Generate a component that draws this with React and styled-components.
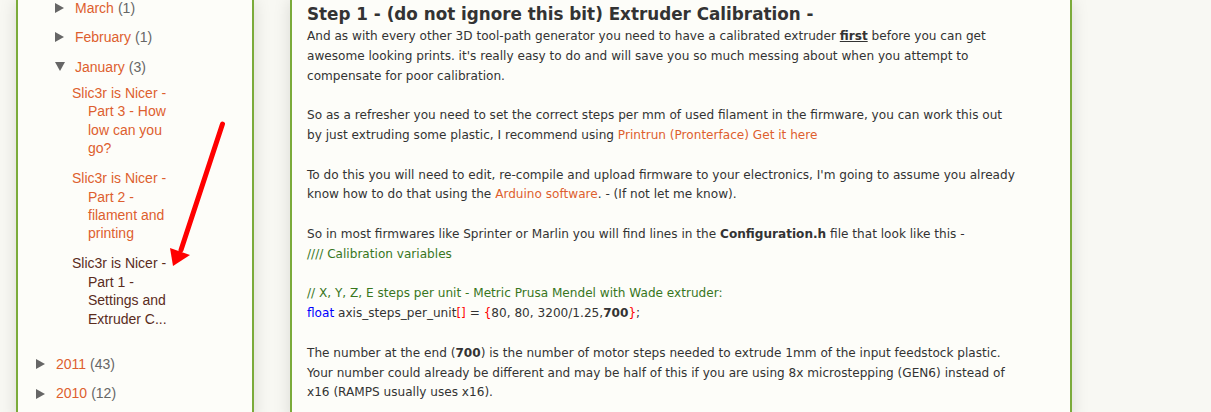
import React from 'react';
import styled, { createGlobalStyle } from 'styled-components';

const GlobalStyle = createGlobalStyle`
  html, body {
    margin: 0;
    padding: 0;
    background: #f8f8f3;
    overflow: hidden;
  }
`;

const PageStyled = styled.div`
  display: flex;
  align-items: stretch;
  gap: 36px;
  padding-left: 16px;
  min-height: 100vh;
`;

const Panel = styled.div`
  box-sizing: border-box;
  background: #fdfdf9;
  border-left: 2px solid #7bab3b;
  border-right: 2px solid #7bab3b;
  box-shadow: 0 0 16px rgba(0, 0, 0, 0.13);
  position: relative;
`;

const SidebarStyled = styled(Panel)`
  width: 238px;
  font-family: "Liberation Sans", Arial, sans-serif;
  font-size: 14px;
  line-height: 18.4px;
  color: #666;
`;

const MainStyled = styled(Panel)`
  width: 782px;
  padding: 3px 15px 0;
  font-family: "DejaVu Sans", Tahoma, sans-serif;
  font-size: 12.1px;
  line-height: 19.8px;
  color: #333;
`;

const ArchiveList = styled.ul`
  list-style: none;
  margin: ${(p) => p.$top || 0}px 0 0;
  padding-left: ${(p) => p.$indent}px;
`;

const ArchiveRow = styled.li`
  display: flex;
  align-items: center;
  padding: 5.5px 0;
`;

const Toggle = styled.span`
  width: 0;
  height: 0;
  margin-right: ${(p) => (p.$open ? 10 : 11)}px;
  border-style: solid;
  border-color: transparent;
  ${(p) =>
    p.$open
      ? 'border-width: 9px 5px 0 5px; border-top-color: #666;'
      : 'border-width: 5px 0 5px 9px; border-left-color: #666;'}
`;

const ArchiveLink = styled.a`
  color: #dd5f2f;
  text-decoration: none;
  margin-right: 4px;
`;

const PostList = styled.ul`
  list-style: none;
  margin: 2.3px 0 0;
  padding-left: 54px;
  width: 108px;
`;

const PostItem = styled.li`
  padding-left: 16px;
  text-indent: -16px;
  margin-bottom: 11.7px;
  a {
    color: ${(p) => (p.$current ? '#5a2c1d' : '#dd5f2f')};
    text-decoration: none;
  }
`;

const ArrowSvg = styled.svg`
  position: absolute;
  left: 142px;
  top: 115px;
  pointer-events: none;
`;

const Heading = styled.h3`
  margin: 0 0 2px;
  font-size: 16.8px;
  line-height: 22px;
  font-weight: bold;
  color: #333;
`;

const Para = styled.p`
  margin: 0 0 19.8px;
  white-space: nowrap;
`;

const Link = styled.a`
  color: #de5f2f;
  text-decoration: none;
`;

const Comment = styled.span`
  color: #38761d;
`;

const Keyword = styled.span`
  color: #0000ff;
`;

const Bracket = styled.span`
  color: #ff0000;
`;

const months = [
  { name: 'March', count: 1 },
  { name: 'February', count: 1 },
];

const posts = [
  { title: 'Slic3r is Nicer - Part 3 - How low can you go?' },
  { title: 'Slic3r is Nicer - Part 2 - filament and printing' },
  { title: 'Slic3r is Nicer - Part 1 - Settings and Extruder C...', current: true },
];

const years = [
  { name: '2011', count: 43 },
  { name: '2010', count: 12 },
];

const Sidebar = () => (
  <SidebarStyled>
    <ArchiveList $indent={37} $top={-6.7}>
      {months.map((m) => (
        <ArchiveRow key={m.name}>
          <Toggle />
          <ArchiveLink href="#">{m.name}</ArchiveLink>({m.count})
        </ArchiveRow>
      ))}
      <ArchiveRow>
        <Toggle $open />
        <ArchiveLink href="#">January</ArchiveLink>(3)
      </ArchiveRow>
    </ArchiveList>
    <PostList>
      {posts.map((p) => (
        <PostItem key={p.title} $current={p.current}>
          <a href="#">{p.title}</a>
        </PostItem>
      ))}
    </PostList>
    <ArchiveList $indent={18} $top={21.5}>
      {years.map((y) => (
        <ArchiveRow key={y.name}>
          <Toggle />
          <ArchiveLink href="#">{y.name}</ArchiveLink>({y.count})
        </ArchiveRow>
      ))}
    </ArchiveList>
    <ArrowSvg width="70" height="160" viewBox="0 0 70 160">
      <line x1="62.5" y1="9" x2="21" y2="135" stroke="#ff0000" strokeWidth="5" strokeLinecap="round" />
      <polygon points="13,151 10,133 30,140" fill="#ff0000" />
    </ArrowSvg>
  </SidebarStyled>
);

const Main = () => (
  <MainStyled>
    <Heading>Step 1 - (do not ignore this bit) Extruder Calibration -</Heading>
    <Para>
      And as with every other 3D tool-path generator you need to have a calibrated extruder{' '}
      <b><u>first</u></b> before you can get
      <br />
      awesome looking prints. it's really easy to do and will save you so much messing about when you attempt to
      <br />
      compensate for poor calibration.
    </Para>
    <Para>
      So as a refresher you need to set the correct steps per mm of used filament in the firmware, you can work this out
      <br />
      by just extruding some plastic, I recommend using <Link href="#">Printrun (Pronterface) Get it here</Link>
    </Para>
    <Para>
      To do this you will need to edit, re-compile and upload firmware to your electronics, I'm going to assume you already
      <br />
      know how to do that using the <Link href="#">Arduino software</Link>. - (If not let me know).
    </Para>
    <Para>
      So in most firmwares like Sprinter or Marlin you will find lines in the <b>Configuration.h</b> file that look like this -
      <br />
      <Comment>//// Calibration variables</Comment>
    </Para>
    <Para>
      <Comment>// X, Y, Z, E steps per unit - Metric Prusa Mendel with Wade extruder:</Comment>
      <br />
      <Keyword>float</Keyword> axis_steps_per_unit<Bracket>[]</Bracket> = <Bracket>{'{'}</Bracket>80, 80, 3200/1.25,
      <b>700</b>
      <Bracket>{'}'}</Bracket>;
    </Para>
    <Para>
      The number at the end (<b>700</b>) is the number of motor steps needed to extrude 1mm of the input feedstock plastic.
      <br />
      Your number could already be different and may be half of this if you are using 8x microstepping (GEN6) instead of
      <br />
      x16 (RAMPS usually uses x16).
    </Para>
  </MainStyled>
);

export default function App() {
  return (
    <>
      <GlobalStyle />
      <PageStyled>
        <Sidebar />
        <Main />
      </PageStyled>
    </>
  );
}
